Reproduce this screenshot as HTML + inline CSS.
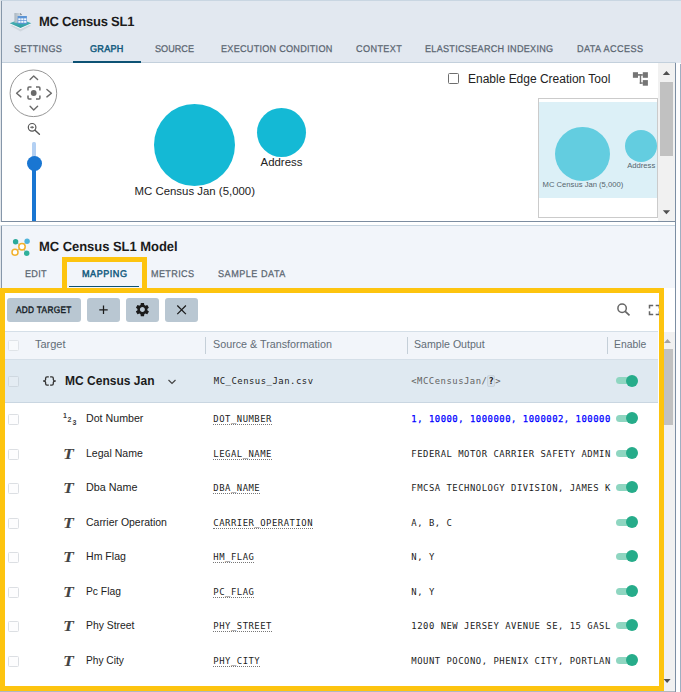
<!DOCTYPE html>
<html><head><meta charset="utf-8">
<style>
*{box-sizing:border-box;margin:0;padding:0}
html,body{width:681px;height:692px;overflow:hidden;background:#fff}
body{position:relative;font-family:"Liberation Sans",sans-serif;color:#222;font-size:12px}
.abs{position:absolute}
.t{position:absolute;white-space:nowrap;line-height:1}
.tab{position:absolute;white-space:nowrap;line-height:1;font-size:9.8px;color:#5a6570;top:44px;font-weight:400;-webkit-text-stroke:0.25px #5a6570}
.tab.act{color:#0e587c;-webkit-text-stroke:0.45px #0e587c}
.mono{font-family:"DejaVu Sans Mono","Liberation Mono",monospace;font-size:8.9px;letter-spacing:0.525px;position:absolute;white-space:nowrap;line-height:1;color:#1c1c1c}
.src{border-bottom:1px dotted #777;padding-bottom:0px}
.cb{position:absolute;width:11px;height:11px;border:1px solid #dcdfe3;border-radius:1.5px;background:#fdfdfe;left:8px}
.lbl{position:absolute;white-space:nowrap;line-height:1;font-size:11px;color:#222;left:86px}
.ti{position:absolute;left:63.4px;margin-top:0.6px;font-family:"Liberation Serif",serif;font-style:italic;font-weight:bold;font-size:15px;line-height:1;color:#444;transform:scaleX(1.18);transform-origin:0 0}
.tog{position:absolute;left:616px;width:23px;height:13px}
.tog i{position:absolute;left:0px;top:3.1px;width:20px;height:7px;border-radius:3.5px;background:#8fd6c1}
.tog b{position:absolute;left:9.9px;top:0.5px;width:12px;height:12px;border-radius:50%;background:#26ac8a}
.btn{position:absolute;top:298px;height:23.6px;background:#b9c7d2;border-radius:3px}
</style></head><body>

<!-- top panel -->
<div class="abs" style="left:0;top:0;width:681px;height:222px;background:#fff"></div>
<div class="abs" style="left:0;top:0;width:681px;height:63px;background:#e2e8f0"></div>
<div class="abs" style="left:0;top:0;width:681px;height:1px;background:#c9d6e2"></div>
<div class="abs" style="left:2px;top:62px;width:674px;height:1px;background:#c3d0dc"></div>
<!-- graph tab underline -->
<div class="abs" style="left:73px;top:60.900px;width:68px;height:2.100px;background:#0d5274"></div>

<!-- title -->
<div class="t" id="title1" style="left:38.6px;top:15.3px;font-size:13.4px;font-weight:bold;color:#1b1b1b;transform:scaleX(0.970) rotate(0.03deg);transform-origin:0 0;letter-spacing:-0.24px">MC Census SL1</div>
<!-- dataset icon -->
<svg class="abs" style="left:8px;top:10px" width="26" height="24" viewBox="8 10 26 24">
<defs><linearGradient id="dg" x1="0" y1="0" x2="1" y2="0"><stop offset="0" stop-color="#aab7c2"/><stop offset="1" stop-color="#dde3e8"/></linearGradient>
<linearGradient id="tg" x1="0" y1="0" x2="0" y2="1"><stop offset="0" stop-color="#57b9bd"/><stop offset="1" stop-color="#2b9aa0"/></linearGradient></defs>
<polygon points="10.5,25.8 20.5,31.4 31,25.8 20.5,21.5" fill="#c9d1d8" opacity="0.75"/>
<polygon points="9.7,24.1 20.5,29.1 31.3,24.1 20.5,20" fill="#f6f8fa"/>
<polygon points="9.700,23.200 20.500,28.100 31.300,23.200 20.500,19" fill="url(#tg)"/>
<polygon points="14.4,13 20.300,13 22,14.700 22,22.800 14.400,22.800" fill="url(#dg)"/>
<polygon points="20.300,13 22,14.700 20.300,14.700" fill="#4b5560"/>
<rect x="17.6" y="16" width="9.3" height="7.900" fill="#5b94d6"/>
<g fill="#f2f7fd"><rect x="18.300" y="18.300" width="2.300" height="1.900"/><rect x="21.200" y="18.300" width="2.300" height="1.900"/><rect x="24.100" y="18.300" width="2.300" height="1.900"/><rect x="18.300" y="20.900" width="2.300" height="1.900"/><rect x="21.200" y="20.900" width="2.300" height="1.900"/><rect x="24.100" y="20.900" width="2.300" height="1.900"/></g>
</svg>

<!-- tabs -->
<div class="tab" id="tb1" style="left:13.5px;transform:scaleX(0.930) rotate(0.03deg);transform-origin:0 0;letter-spacing:0.36px">SETTINGS</div>
<div class="tab act" id="tb2" style="left:90.4px;transform:scaleX(0.930) rotate(0.03deg);transform-origin:0 0;letter-spacing:0.26px">GRAPH</div>
<div class="tab" id="tb3" style="left:155.3px;transform:scaleX(0.930) rotate(0.03deg);transform-origin:0 0;letter-spacing:0.00px">SOURCE</div>
<div class="tab" id="tb4" style="left:220.7px;transform:scaleX(0.930) rotate(0.03deg);transform-origin:0 0;letter-spacing:0.27px">EXECUTION CONDITION</div>
<div class="tab" id="tb5" style="left:355.5px;transform:scaleX(0.930) rotate(0.03deg);transform-origin:0 0;letter-spacing:0.42px">CONTEXT</div>
<div class="tab" id="tb6" style="left:425px;transform:scaleX(0.930) rotate(0.03deg);transform-origin:0 0;letter-spacing:0.29px">ELASTICSEARCH INDEXING</div>
<div class="tab" id="tb7" style="left:577.4px;transform:scaleX(0.930) rotate(0.03deg);transform-origin:0 0;letter-spacing:0.44px">DATA ACCESS</div>

<!-- nav control -->
<svg class="abs" style="left:8px;top:68px" width="52" height="76" viewBox="8 68 52 76">
<circle cx="33.4" cy="93.3" r="23.3" fill="#fff" stroke="#8a8a8a" stroke-width="0.9"/>
<g fill="none" stroke="#6a6a6a" stroke-width="1.4" stroke-linecap="round" stroke-linejoin="round">
<polyline points="30.1,79.5 33.7,75.9 37.6,79.5"/>
<polyline points="30.1,106.300 33.700,109.900 37.600,106.300"/>
<polyline points="20.900,89.500 16.600,93.200 20.900,96.900"/>
<polyline points="46.900,89.500 51.400,93.200 46.900,96.900"/>
</g>
<g fill="none" stroke="#6a6a6a" stroke-width="1.5" stroke-linejoin="round">
<path d="M28,90.5 v-2.500 q0,-1 1,-1 h2.500"/><path d="M36,87 h2.900 q1,0 1,1 v2.500"/><path d="M39.900,95.500 v2.500 q0,1 -1,1 h-2.900"/><path d="M31.500,99 h-2.500 q-1,0 -1,-1 v-2.500"/>
</g>
<circle cx="33.7" cy="93" r="2.900" fill="#6a6a6a"/>
<circle cx="32.1" cy="127.3" r="3.800" fill="none" stroke="#555" stroke-width="1.2"/>
<line x1="35" y1="130.200" x2="39.400" y2="134.300" stroke="#555" stroke-width="1.4" stroke-linecap="round"/>
<line x1="30.2" y1="127.300" x2="34" y2="127.300" stroke="#555" stroke-width="0.9"/>
<line x1="32.1" y1="126" x2="32.100" y2="128.600" stroke="#555" stroke-width="0.9"/>
</svg>
<!-- slider -->
<div class="abs" style="left:32.2px;top:142px;width:3.600px;height:22px;background:#b3d0f3;border-radius:1.5px"></div>
<div class="abs" style="left:32.2px;top:162px;width:3.600px;height:59px;background:#1976d2"></div>
<div class="abs" style="left:26.500px;top:155.500px;width:15px;height:15px;border-radius:50%;background:#1976d2"></div>

<!-- main circles -->
<div class="abs" style="left:154px;top:104px;width:81px;height:82px;border-radius:50%;background:#14b9d5"></div>
<div class="abs" style="left:257px;top:108px;width:49px;height:49px;border-radius:50%;background:#14b9d5"></div>
<div class="t" id="g1" style="left:134.5px;top:186px;font-size:11.4px;color:#222;letter-spacing:0.01px">MC Census Jan (5,000)</div>
<div class="t" id="g2" style="left:260.5px;top:157px;font-size:11.4px;color:#222;letter-spacing:0.03px">Address</div>

<!-- checkbox + edge tool -->
<div class="abs" style="left:448.3px;top:73.300px;width:10.500px;height:10.500px;border:1px solid #6e6e6e;border-radius:1.5px;background:#fff"></div>
<div class="t" id="edge" style="left:468px;top:72.6px;font-size:12px;color:#222;letter-spacing:-0.01px">Enable Edge Creation Tool</div>
<!-- hierarchy icon -->
<svg class="abs" style="left:631px;top:70px" width="19" height="18" viewBox="631 70 19 18" fill="#757575">
<rect x="632.9" y="72.2" width="5.100" height="5.600"/><rect x="642.8" y="72.2" width="5.100" height="5.600"/><rect x="642.8" y="80.1" width="5.100" height="5.600"/>
<rect x="638" y="74.100" width="4.800" height="1.600"/><rect x="639.800" y="74.100" width="1.400" height="9.700"/><rect x="639.800" y="82.300" width="3" height="1.500"/>
</svg>

<!-- minimap -->
<div class="abs" style="left:538px;top:98px;width:120px;height:120px;background:#fff;border:1px solid #cbcbcb;overflow:hidden">
<div class="abs" style="left:0;top:2.9px;width:120px;height:95.800px;background:#dcf0f7"></div>
<div class="abs" style="left:16.2px;top:27.600px;width:55.100px;height:54.700px;border-radius:50%;background:#63cde0"></div>
<div class="abs" style="left:85.8px;top:30.600px;width:32.200px;height:32.200px;border-radius:50%;background:#63cde0"></div>
<div class="t" id="m1" style="left:3.6px;top:82.200px;font-size:7.65px;color:#55656e">MC Census Jan (5,000)</div>
<div class="t" id="m2" style="left:88.2px;top:62.900px;font-size:7.65px;color:#55656e">Address</div>
</div>

<!-- graph scrollbar -->
<div class="abs" style="left:658px;top:63px;width:17px;height:158px;background:#f1f1f1"></div>
<div class="abs" style="left:660px;top:82px;width:13px;height:74px;background:#c1c1c1"></div>
<svg class="abs" style="left:658px;top:63px" width="17" height="158" viewBox="0 0 17 158"><polygon points="4.800,12 12.100,12 8.450,8" fill="#505050"/><polygon points="4.800,147.200 12.100,147.200 8.450,151.200" fill="#505050"/></svg>

<!-- panel borders -->
<div class="abs" style="left:0;top:0;width:1px;height:692px;background:#e3e7eb"></div>
<div class="abs" style="left:1px;top:1px;width:1px;height:220px;background:#8697aa"></div>


<div class="abs" style="left:1px;top:221px;width:676px;height:1px;background:#7d8da0"></div>
<div class="abs" style="left:0;top:222px;width:681px;height:3px;background:#fff"></div>

<!-- second panel -->
<div class="abs" style="left:1px;top:225px;width:676px;height:467px;background:#f2f5fa"></div>
<div class="abs" style="left:1px;top:225px;width:676px;height:1px;background:#c6d4df"></div>
<div class="abs" style="left:1px;top:226px;width:1px;height:466px;background:#8697aa"></div>

<!-- model icon -->
<svg class="abs" style="left:9px;top:236px" width="24" height="22" viewBox="9 236 24 22">
<g stroke="#9aa3ab" stroke-width="0.8"><line x1="15.6" y1="241.8" x2="22" y2="246.7"/><line x1="27.1" y1="241.2" x2="22" y2="246.7"/><line x1="26.7" y1="253.3" x2="22" y2="246.7"/><line x1="15" y1="252.2" x2="22" y2="246.7"/></g>
<circle cx="15.6" cy="241.8" r="2.700" fill="#2aa99a"/>
<circle cx="27.1" cy="241.2" r="2.700" fill="#4fb3da"/>
<circle cx="26.7" cy="253.3" r="2.700" fill="#2fb09a"/>
<circle cx="22" cy="246.7" r="3.200" fill="#fff" stroke="#f2b12c" stroke-width="1.500"/>
<circle cx="15" cy="252.2" r="3" fill="#fff" stroke="#f2b12c" stroke-width="1.500"/>
</svg>
<div class="t" id="title2" style="left:38.6px;top:240.4px;font-size:13.4px;font-weight:bold;color:#1b1b1b;transform:scaleX(0.970) rotate(0.03deg);transform-origin:0 0;letter-spacing:-0.04px">MC Census SL1 Model</div>

<div class="tab" id="tc1" style="left:24.5px;top:269px;transform:scaleX(0.930) rotate(0.03deg);transform-origin:0 0;letter-spacing:0.32px">EDIT</div>
<div class="tab act" id="tc2" style="left:81.7px;top:269px;transform:scaleX(0.930) rotate(0.03deg);transform-origin:0 0;letter-spacing:0.54px">MAPPING</div>
<div class="tab" id="tc3" style="left:151px;top:269px;transform:scaleX(0.930) rotate(0.03deg);transform-origin:0 0;letter-spacing:0.38px">METRICS</div>
<div class="tab" id="tc4" style="left:218px;top:269px;transform:scaleX(0.930) rotate(0.03deg);transform-origin:0 0;letter-spacing:0.53px">SAMPLE DATA</div>
<div class="abs" style="left:69px;top:285.700px;width:70px;height:1.500px;background:#0d5274"></div>

<!-- mapping highlight box -->
<div class="abs" style="left:62px;top:257px;width:85px;height:36px;border:5px solid #fdc40f;border-bottom:none"></div>

<!-- mapping content -->
<div class="abs" id="content" style="left:2px;top:288px;width:674px;height:404px;background:#fff"></div>
<div class="abs" style="left:5px;top:331px;width:653px;height:29px;background:#f2f5fa"></div>
<div class="abs" style="left:5px;top:331px;width:653px;height:1px;background:#d5dfe8"></div>
<div class="abs" style="left:5px;top:359px;width:653px;height:1px;background:#d5dfe8"></div>
<div class="abs" style="left:5px;top:360px;width:653px;height:42px;background:#dfe9f1"></div>
<div class="abs" style="left:5px;top:402px;width:653px;height:1px;background:#c9d6e1"></div>

<!-- toolbar -->
<div class="btn" style="left:7px;width:73.5px"></div>
<div class="t" id="addt" style="left:16.2px;top:305px;font-size:9.5px;font-weight:normal;color:#141c24;-webkit-text-stroke:0.4px #141c24;transform:scaleX(0.870) rotate(0.03deg);transform-origin:0 0;letter-spacing:0.36px">ADD TARGET</div>
<div class="btn" style="left:87px;width:32.7px"></div>
<svg class="abs" style="left:87px;top:298px" width="33" height="24" viewBox="87 298 33 24"><path d="M103.5,305.600 v8.400 M99.300,309.800 h8.400" stroke="#1b1b1b" stroke-width="1.25" fill="none"/></svg>
<div class="btn" style="left:126.2px;width:32.7px"></div>
<svg class="abs" style="left:126px;top:298px" width="33" height="24" viewBox="126 298 33 24">
<g transform="translate(142.4,309.600) scale(0.69) translate(-12,-12)"><path fill="#1b1b1b" d="M19.14,12.94c0.04-0.3,0.06-0.61,0.06-0.94c0-0.32-0.02-0.64-0.07-0.94l2.03-1.58c0.18-0.14,0.23-0.41,0.12-0.61l-1.92-3.32c-0.12-0.22-0.37-0.29-0.59-0.22l-2.39,0.96c-0.5-0.38-1.03-0.7-1.62-0.94L14.4,2.81c-0.04-0.24-0.24-0.41-0.48-0.41h-3.840c-0.24,0-0.43,0.17-0.47,0.41L9.250,5.350C8.660,5.590,8.120,5.920,7.630,6.290L5.240,5.330c-0.22-0.08-0.47,0-0.59,0.22L2.740,8.870C2.620,9.080,2.660,9.340,2.860,9.480l2.030,1.580C4.840,11.360,4.800,11.690,4.800,12s0.020,0.640,0.070,0.940l-2.030,1.580c-0.18,0.14-0.23,0.41-0.12,0.61l1.920,3.320c0.12,0.22,0.37,0.29,0.59,0.22l2.390-0.960c0.5,0.38,1.030,0.7,1.620,0.940l0.360,2.540c0.05,0.24,0.24,0.41,0.48,0.41h3.840c0.24,0,0.44-0.17,0.47-0.41l0.360-2.540c0.59-0.24,1.130-0.56,1.620-0.940l2.390,0.960c0.22,0.08,0.47,0,0.59-0.22l1.920-3.320c0.12-0.22,0.070-0.47-0.12-0.61L19.140,12.940z M12,15.600c-1.980,0-3.600-1.620-3.600-3.600s1.620-3.600,3.600-3.600s3.600,1.620,3.600,3.600S13.980,15.600,12,15.600z"/></g>
</svg>
<div class="btn" style="left:165.3px;width:32.600px"></div>
<svg class="abs" style="left:165px;top:298px" width="33" height="24" viewBox="165 298 33 24"><path d="M177.300,305.500 l8.600,8.600 M185.900,305.500 l-8.600,8.600" stroke="#1b1b1b" stroke-width="1.25" fill="none"/></svg>

<!-- search + fullscreen -->
<svg class="abs" style="left:614px;top:300px" width="20" height="20" viewBox="614 300 20 20"><circle cx="622.1" cy="308.2" r="4.200" fill="none" stroke="#666" stroke-width="1.500"/><line x1="625.2" y1="311.300" x2="629.500" y2="315.300" stroke="#666" stroke-width="1.700"/></svg>
<svg class="abs" style="left:646px;top:302px" width="14" height="16" viewBox="646 302 14 16"><g fill="none" stroke="#666" stroke-width="1.500"><path d="M649.5,308.600 v-3.200 h3.700"/><path d="M655.700,305.400 h3.700 v3.200"/><path d="M659.400,311.200 v3.200 h-3.700"/><path d="M653.200,314.400 h-3.700 v-3.200"/></g></svg>

<!-- table header -->
<div class="cb" style="top:340px;border-color:#e0e4e8;background:#f8fafc"></div>
<div class="t" id="h1" style="left:35px;top:338.7px;font-size:11px;color:#626d77;letter-spacing:-0.01px">Target</div>
<div class="abs" style="left:205px;top:337px;width:1px;height:17px;background:#c5cfd8"></div>
<div class="t" id="h2" style="left:213px;top:338.7px;font-size:11px;color:#626d77;transform:scaleX(0.9772);transform-origin:0 0">Source &amp; Transformation</div>
<div class="abs" style="left:407px;top:337px;width:1px;height:17px;background:#c5cfd8"></div>
<div class="t" id="h3" style="left:414px;top:338.7px;font-size:11px;color:#626d77;transform:scaleX(0.9635);transform-origin:0 0">Sample Output</div>
<div class="abs" style="left:607px;top:337px;width:1px;height:17px;background:#c5cfd8"></div>
<div class="t" id="h4" style="left:614px;top:338.7px;font-size:11px;color:#626d77;transform:scaleX(0.9397);transform-origin:0 0">Enable</div>

<!-- group row -->
<div class="cb" style="top:376px;background:#e4ecf3;border-color:#cfd8e0"></div>
<svg class="abs" style="left:41px;top:374px" width="17" height="14" viewBox="41 374 17 14"><g fill="none" stroke="#333" stroke-width="1.300" stroke-linejoin="round"><path d="M48.8,376.900 H47 Q45.600,376.900 45.600,378.300 V379.500 Q45.600,381 43.600,381 Q45.600,381 45.600,382.500 V383.700 Q45.600,385.100 47,385.100 H48.800"/><path d="M50.100,376.900 H51.900 Q53.300,376.900 53.300,378.300 V379.500 Q53.300,381 55.300,381 Q53.300,381 53.300,382.500 V383.700 Q53.300,385.100 51.900,385.100 H50.100"/></g></svg>
<div class="t" id="grp" style="left:65px;top:375px;font-size:12px;font-weight:bold;color:#1b1b1b;letter-spacing:0.01px">MC Census Jan</div>
<svg class="abs" style="left:167.3px;top:377.6px" width="10" height="8" viewBox="0 0 10 8"><polyline points="1.5,2 5,5.5 8.500,2" fill="none" stroke="#444" stroke-width="1.2"/></svg>
<div class="mono" id="gs" style="left:213.8px;top:377.2px">MC_Census_Jan.csv</div>
<div class="mono" id="go" style="left:411.2px;top:377.2px;color:#636363">&lt;MCCensusJan/<span style="background:#d7e1ea;border:1px solid #c9d4de;border-radius:2px;font-weight:bold;color:#1a1a1a">?</span>&gt;</div>
<div class="tog" style="top:374px"><i></i><b></b></div>

<!-- ROWS -->
<div class="cb" style="top:413.8px"></div>
<svg class="abs" style="left:60px;top:410.0px" width="20" height="18" viewBox="60 410.0 20 18"><g font-family="Liberation Sans, sans-serif" font-weight="bold" font-size="7" fill="#3c3c3c"><text x="62.900" y="418.0">1</text><text x="67.500" y="421.8">2</text><text x="72.600" y="425.0">3</text></g></svg>
<div class="lbl" id="l0" style="top:412.7px;transform:scaleX(0.9680);transform-origin:0 0">Dot Number</div>
<div class="mono" id="s0" style="left:213.3px;top:415.4px"><span class="src">DOT_NUMBER</span></div>
<div class="mono" id="o0" style="left:411.3px;top:415.4px;color:#0000ff;-webkit-text-stroke:0.25px #0000ff">1, 10000, 1000000, 1000002, 100000</div>
<div class="tog" style="top:411.9px"><i></i><b></b></div>
<div class="cb" style="top:448.8px"></div>
<div class="ti" style="top:446.3px">T</div>
<div class="lbl" id="l1" style="top:447.7px;transform:scaleX(0.9591);transform-origin:0 0">Legal Name</div>
<div class="mono" id="s1" style="left:213.3px;top:450.4px"><span class="src">LEGAL_NAME</span></div>
<div class="mono" id="o1" style="left:411.3px;top:450.4px">FEDERAL MOTOR CARRIER SAFETY ADMIN</div>
<div class="tog" style="top:446.9px"><i></i><b></b></div>
<div class="cb" style="top:482.8px"></div>
<div class="ti" style="top:480.3px">T</div>
<div class="lbl" id="l2" style="top:481.7px;transform:scaleX(0.9776);transform-origin:0 0">Dba Name</div>
<div class="mono" id="s2" style="left:213.3px;top:484.4px"><span class="src">DBA_NAME</span></div>
<div class="mono" id="o2" style="left:411.3px;top:484.4px">FMCSA TECHNOLOGY DIVISION, JAMES K</div>
<div class="tog" style="top:480.9px"><i></i><b></b></div>
<div class="cb" style="top:517.8px"></div>
<div class="ti" style="top:515.3px">T</div>
<div class="lbl" id="l3" style="top:516.7px;transform:scaleX(0.9519);transform-origin:0 0">Carrier Operation</div>
<div class="mono" id="s3" style="left:213.3px;top:519.4px"><span class="src">CARRIER_OPERATION</span></div>
<div class="mono" id="o3" style="left:411.3px;top:519.4px">A, B, C</div>
<div class="tog" style="top:515.9px"><i></i><b></b></div>
<div class="cb" style="top:551.8px"></div>
<div class="ti" style="top:549.3px">T</div>
<div class="lbl" id="l4" style="top:550.7px;transform:scaleX(0.9600);transform-origin:0 0">Hm Flag</div>
<div class="mono" id="s4" style="left:213.3px;top:553.4px"><span class="src">HM_FLAG</span></div>
<div class="mono" id="o4" style="left:411.3px;top:553.4px">N, Y</div>
<div class="tog" style="top:549.9px"><i></i><b></b></div>
<div class="cb" style="top:586.8px"></div>
<div class="ti" style="top:584.3px">T</div>
<div class="lbl" id="l5" style="top:585.7px;transform:scaleX(0.9357);transform-origin:0 0">Pc Flag</div>
<div class="mono" id="s5" style="left:213.3px;top:588.4px"><span class="src">PC_FLAG</span></div>
<div class="mono" id="o5" style="left:411.3px;top:588.4px">N, Y</div>
<div class="tog" style="top:584.9px"><i></i><b></b></div>
<div class="cb" style="top:620.8px"></div>
<div class="ti" style="top:618.3px">T</div>
<div class="lbl" id="l6" style="top:619.7px;transform:scaleX(0.9424);transform-origin:0 0">Phy Street</div>
<div class="mono" id="s6" style="left:213.3px;top:622.4px"><span class="src">PHY_STREET</span></div>
<div class="mono" id="o6" style="left:411.3px;top:622.4px">1200 NEW JERSEY AVENUE SE, 15 GASL</div>
<div class="tog" style="top:618.9px"><i></i><b></b></div>
<div class="cb" style="top:655.8px"></div>
<div class="ti" style="top:653.3px">T</div>
<div class="lbl" id="l7" style="top:654.7px;transform:scaleX(0.9251);transform-origin:0 0">Phy City</div>
<div class="mono" id="s7" style="left:213.3px;top:657.4px"><span class="src">PHY_CITY</span></div>
<div class="mono" id="o7" style="left:411.3px;top:657.4px">MOUNT POCONO, PHENIX CITY, PORTLAN</div>
<div class="tog" style="top:653.9px"><i></i><b></b></div>

<!-- yellow frame -->
<div class="abs" style="left:0;top:287.5px;width:664px;height:403.3px;border:5px solid #fdc40f"></div>

<!-- lower scrollbar -->
<div class="abs" style="left:664px;top:332px;width:11.5px;height:360px;background:#f1f1f1"></div>
<div class="abs" style="left:664px;top:348.800px;width:9px;height:76px;background:#c1c1c1"></div>
<svg class="abs" style="left:660px;top:332px" width="15" height="360" viewBox="0 0 15 360"><polygon points="4,11 11,11 7.5,7" fill="#a3a3a3"/><polygon points="3.600,347 10.600,347 7.100,351" fill="#505050"/></svg>
<div class="abs" style="left:0;top:690.7px;width:681px;height:2px;background:#b0b8c0"></div>
<div class="abs" style="left:676px;top:63px;width:5px;height:629px;background:#fdfdfe"></div><div class="abs" style="left:680px;top:64px;width:1px;height:628px;background:#9fb0c2"></div>
<div class="abs" style="left:675px;top:63px;width:1.200px;height:629px;background:#7c8ea3"></div>
</body></html>
